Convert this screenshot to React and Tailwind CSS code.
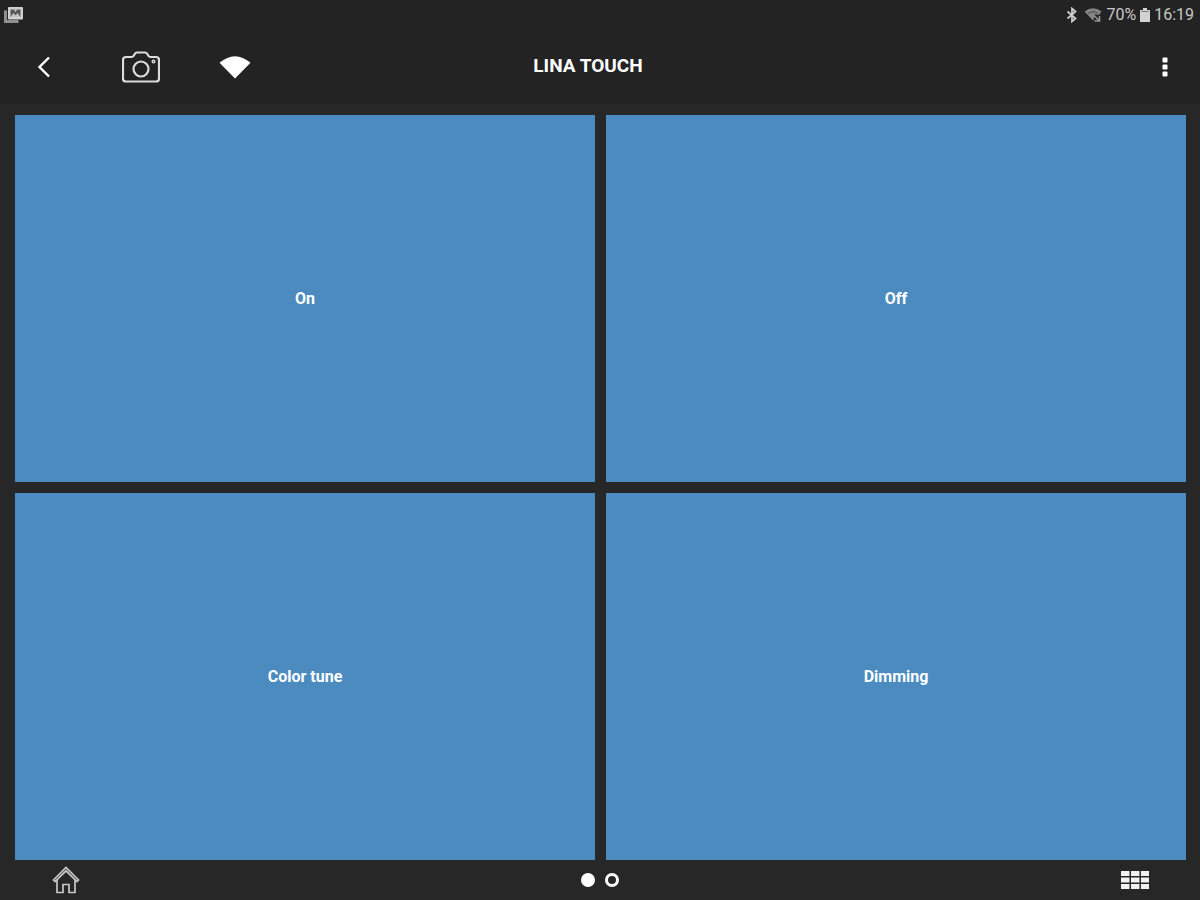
import React, { useState } from 'react';

const tiles = ['On', 'Off', 'Color tune', 'Dimming'];

const GalleryIcon = () => (
  <svg width="20" height="18" viewBox="0 0 20 18" aria-hidden="true">
    <path d="M1.500 4.500v11h13" fill="none" stroke="#8f8f8f" strokeWidth="3" />
    <rect x="4" y="1" width="15" height="12.5" rx="1" fill="#d0d0d0" />
    <path d="M6.500 3.500h10v7.500h-10z" fill="#555555" />
    <path d="M6.500 11l3-4 2 2.200 2-2.200 3 4zM9.500 3.500h4l-2 2.500z" fill="#c4c4c4" />
  </svg>
);

const BluetoothIcon = () => (
  <svg width="12" height="16" viewBox="0 0 12 16" fill="none" stroke="#cccccc" strokeWidth="1.8" aria-hidden="true">
    <path d="M1.500 4.500l8 7L6 14.500v-13l3.500 3-8 7" />
  </svg>
);

const StatusWifiIcon = () => (
  <svg width="18" height="16" viewBox="0 0 18 16" aria-hidden="true">
    <path d="M0.500 4.500Q9-2 17.500 4.500L15 8l-4.500-.5-1 6-1.500-1z" fill="#858585" />
    <path d="M4 6.500Q9 3 14 6.500" fill="none" stroke="#4a4a4a" strokeWidth="1" />
    <path d="M10 8.500l5 5M15.500 9v5h-5" fill="none" stroke="#999999" strokeWidth="1.600" />
  </svg>
);

const BatteryIcon = () => (
  <svg width="12" height="16" viewBox="0 0 12 16" aria-hidden="true">
    <path d="M4 1h4v2h3v12H1V3h3z" fill="#d2d2d2" />
    <path d="M2.500 4.500h7" stroke="#777777" strokeWidth="1" />
  </svg>
);

const BackIcon = () => (
  <svg width="14" height="22" viewBox="0 0 14 22" fill="none" stroke="#ffffff" strokeWidth="2.4" aria-hidden="true">
    <path d="M12 1.500L2.500 11l9.500 9.500" />
  </svg>
);

const CameraIcon = () => (
  <svg width="38" height="32" viewBox="0 0 38 32" fill="none" stroke="#dcdcdc" strokeWidth="2.2" strokeLinejoin="round" aria-hidden="true">
    <path d="M4 6h5.500q1.500 0 2.200-1.200l1.200-2Q13.500 1.500 15 1.500h8q1.500 0 2.200 1.300l1.200 2Q27 6 28.500 6H34q3 0 3 3v18.500q0 3-3 3H4q-3 0-3-3V9q0-3 3-3z" />
    <circle cx="19" cy="18" r="7.500" />
    <circle cx="31.500" cy="10.500" r="1.300" strokeWidth="1.400" />
  </svg>
);

const WifiIcon = () => (
  <svg width="32" height="24" viewBox="0 0 32 24" fill="#ffffff" aria-hidden="true">
    <path d="M0.500 7.800Q16-5.500 31.500 7.800L16 23.500z" />
  </svg>
);

const MoreIcon = () => (
  <svg width="6" height="20" viewBox="0 0 6 20" fill="#ffffff" aria-hidden="true">
    <rect x="0.500" y="0.500" width="5" height="5" rx="1" />
    <rect x="0.500" y="7.500" width="5" height="5" rx="1" />
    <rect x="0.500" y="14.500" width="5" height="5" rx="1" />
  </svg>
);

const HomeIcon = () => (
  <svg width="28" height="28" viewBox="0 0 28 28" fill="none" stroke="#c8c8c8" strokeWidth="1.700" aria-hidden="true">
    <path d="M1.500 14L14 1.500 26.500 14l-1.500 1.500L14 4.800 3 15.500z" />
    <path d="M5 14v12.500h6v-8h6v8h6V14" />
  </svg>
);

const GridIcon = () => (
  <svg width="30" height="20" viewBox="0 0 30 20" fill="#f2f2f2" aria-hidden="true">
    <path d="M1 1h8.500v5H1zM11 1h8.500v5H11zM21 1h8v5h-8zM1 7.500h8.500v5H1zM11 7.500h8.500v5H11zM21 7.500h8v5h-8zM1 14h8.500v5H1zM11 14h8.500v5H11zM21 14h8v5h-8z" />
  </svg>
);

const StatusBar = () => (
  <div className="flex h-[30px] items-center justify-between pl-1 pr-[6px] text-base text-[#c8c8c8]">
    <GalleryIcon />
    <div className="flex items-center">
      <BluetoothIcon />
      <span className="ml-[6px]"><StatusWifiIcon /></span>
      <span className="ml-1">70%</span>
      <span className="ml-[3px]"><BatteryIcon /></span>
      <span className="ml-[3px]">16:19</span>
    </div>
  </div>
);

const Header = () => (
  <header className="grid h-[74px] grid-cols-[1fr_auto_1fr] items-center pr-6 pb-px">
    <div className="flex items-center">
      <button type="button" aria-label="Back" className="flex h-12 w-[88px] items-center justify-center">
        <BackIcon />
      </button>
      <button type="button" aria-label="Camera" className="flex h-12 w-[106px] items-center justify-center">
        <CameraIcon />
      </button>
      <button type="button" aria-label="Wi-Fi" className="flex h-12 w-[82px] items-center justify-center">
        <WifiIcon />
      </button>
    </div>
    <h1 className="text-[19px] font-bold">LINA TOUCH</h1>
    <button type="button" aria-label="More options" className="flex h-12 w-[22px] items-center justify-center justify-self-end">
      <MoreIcon />
    </button>
  </header>
);

const App = () => {
  const [page, setPage] = useState(0);

  return (
    <div className="flex min-h-screen flex-col bg-[#272727] font-[Roboto,sans-serif] text-white">
      <div className="bg-[#232323]">
        <StatusBar />
        <Header />
      </div>

      <main className="grid flex-1 grid-cols-2 grid-rows-2 gap-[11px] pt-[11px] pr-[14px] pl-[15px]">
        {tiles.map((label) => (
          <button key={label} type="button" className="bg-[#4b8bbf] pt-px text-base font-bold">
            {label}
          </button>
        ))}
      </main>

      <footer className="grid h-10 grid-cols-[1fr_auto_1fr] items-center px-[50px]">
        <button type="button" aria-label="Home" className="flex w-8 justify-center">
          <HomeIcon />
        </button>
        <div className="flex gap-[10px]">
          {[0, 1].map((index) => (
            <button
              key={index}
              type="button"
              aria-label={`Page ${index + 1}`}
              onClick={() => setPage(index)}
              className={`h-[14px] w-[14px] rounded-full border-3 border-white ${page === index ? 'bg-white' : 'bg-transparent'}`}
            />
          ))}
        </div>
        <button type="button" aria-label="Overview" className="flex w-[30px] justify-center justify-self-end">
          <GridIcon />
        </button>
      </footer>
    </div>
  );
};

export default App;
